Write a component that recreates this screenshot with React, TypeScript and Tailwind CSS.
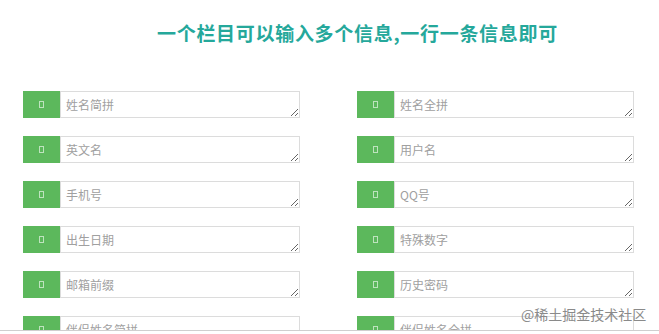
import React from 'react'

const fields: [string, string][] = [
  ['姓名简拼', '姓名全拼'],
  ['英文名', '用户名'],
  ['手机号', 'QQ号'],
  ['出生日期', '特殊数字'],
  ['邮箱前缀', '历史密码'],
  ['伴侣姓名简拼', '伴侣姓名全拼'],
]

function Field({ label }: { label: string }) {
  return (
    <div className="flex h-[27px]">
      <div className="flex w-[37px] shrink-0 items-center justify-center bg-[#5cb85c]">
        <span className="block h-[7px] w-[5px] border border-white/60" />
      </div>
      <textarea
        placeholder={label}
        className="h-[27px] flex-1 resize border border-[#dcdcdc] bg-white px-[5px] pt-[5px] text-[12px] leading-[16px] text-[#555] outline-none placeholder:text-[#a0a0a0]"
      />
    </div>
  )
}

export default function App() {
  return (
    <div
      className="relative h-[334px] w-[659px] overflow-hidden bg-white"
      style={{ fontFamily: "'Noto Sans CJK SC', 'Noto Sans', sans-serif" }}
    >
      <h1 className="pl-[157px] pt-[19px] text-[19px] font-bold leading-[28px] tracking-[0.7px] text-[#25a89b]">
        一个栏目可以输入多个信息,一行一条信息即可
      </h1>

      <div className="mt-[44px] h-[240px] overflow-hidden border-b border-[#cfcfcf]">
        <div className="grid grid-cols-[277px_277px] gap-x-[57px] gap-y-[18px] pl-[23px]">
          {fields.map(([a, b]) => (
            <React.Fragment key={a}>
              <Field label={a} />
              <Field label={b} />
            </React.Fragment>
          ))}
        </div>
      </div>

      <div className="absolute left-[521px] top-[304px] text-[14px] leading-[20px] text-[#8a8a8a]">
        @稀土掘金技术社区
      </div>
    </div>
  )
}
